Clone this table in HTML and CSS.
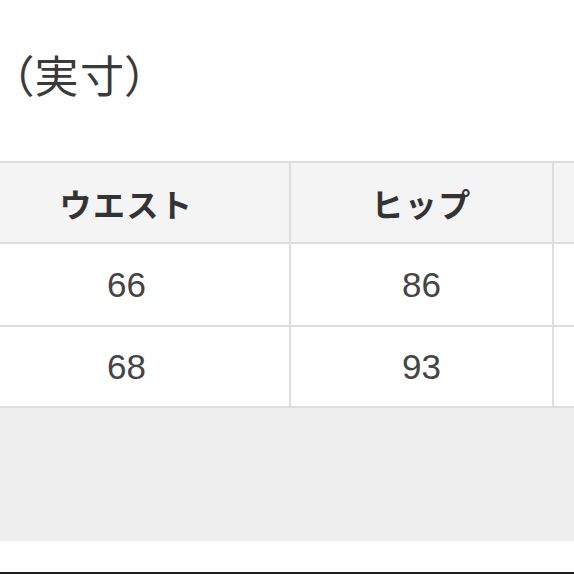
FILE: index.html
```html
<!DOCTYPE html>
<html lang="ja">
<head>
<meta charset="utf-8">
<title>実寸</title>
<link rel="stylesheet" href="styles.css">
</head>
<body>
<div class="page">
  <div class="head">
    <h1 class="title">（実寸）</h1>
  </div>
  <div class="table">
    <div class="cell th">ウエスト</div>
    <div class="cell th">ヒップ</div>
    <div class="cell th"></div>
    <div class="cell td">66</div>
    <div class="cell td">86</div>
    <div class="cell td"></div>
    <div class="cell td">68</div>
    <div class="cell td">93</div>
    <div class="cell td"></div>
  </div>
  <div class="footer-gray"></div>
  <div class="footer-white"></div>
  <div class="footer-line"></div>
</div>
</body>
</html>
```

FILE: styles.css
```css
html, body {
  margin: 0;
  padding: 0;
  background: #ffffff;
}
body {
  width: 574px;
  height: 574px;
  overflow: hidden;
  font-family: "Noto Sans CJK JP", "Noto Sans", sans-serif;
  color: #333333;
}
.page {
  display: flex;
  flex-direction: column;
  width: 574px;
  height: 574px;
  overflow: hidden;
}
.head {
  height: 161px;
  flex: none;
  padding-left: 11px;
  box-sizing: border-box;
  padding-top: 50px;
}
.title {
  margin: 0;
  font-size: 44px;
  line-height: 48px;
  font-weight: 400;
  color: #3a3a3a;
  font-feature-settings: "palt";
  letter-spacing: 1.5px;
}
.table {
  flex: none;
  display: grid;
  grid-template-columns: 325px 261px 200px;
  grid-template-rows: 79px 81px 79px;
  gap: 2px;
  padding: 2px 0;
  margin-left: -36px;
  background: #dedede;
}
.cell {
  display: flex;
  align-items: center;
  justify-content: center;
  background: #ffffff;
}
.th {
  background: #f4f4f4;
  font-size: 32px;
  font-weight: 700;
  color: #333333;
  letter-spacing: 1.5px;
}
.td {
  font-family: "Liberation Sans", Arial, sans-serif;
  font-weight: 400;
  font-size: 35px;
  color: #444444;
  padding-top: 1px;
}
.footer-gray {
  flex: none;
  height: 133px;
  background: #eeeeee;
}
.footer-white {
  flex: 1;
  background: #ffffff;
}
.footer-line {
  flex: none;
  height: 2px;
  background: #1e1e1e;
}
```
